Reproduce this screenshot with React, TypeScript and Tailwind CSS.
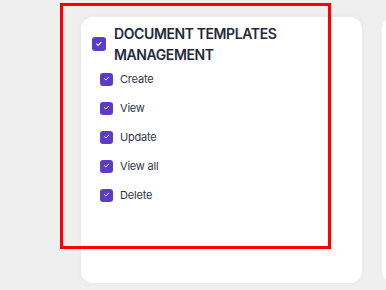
import React from 'react';

const Check: React.FC<{ size: number }> = ({ size }) => (
  <span
    className="flex shrink-0 items-center justify-center rounded-[3px] bg-[#5b3cc4]"
    style={{ width: size, height: size }}
  >
    <svg width={size * 0.55} height={size * 0.55} viewBox="0 0 12 12" fill="none">
      <path d="M2.5 6.2l2.3 2.2 4.7-4.8" stroke="white" strokeWidth="1.6" strokeLinecap="round" strokeLinejoin="round" />
    </svg>
  </span>
);

const permissions = ['Create', 'View', 'Update', 'View all', 'Delete'];

export default function App() {
  return (
    <div className="relative h-[290px] w-[386px] overflow-hidden bg-[#efefef] font-['Inter',sans-serif]">
      <div className="flex gap-[20px] pl-[81px] pt-[17px]">
        {/* Permission card */}
        <div className="h-[266px] w-[281px] shrink-0 rounded-[12px] bg-white px-[11px] pt-[6px] shadow-[0_0_6px_rgba(0,0,0,0.04)]">
          <div className="flex items-center gap-[8px]">
            <Check size={14} />
            <div className="text-[14px] font-semibold uppercase leading-[21px] tracking-[-0.4px] text-[#1f2a3c]">
              Document Templates
              <br />
              Management
            </div>
          </div>
          <ul className="mt-[7px] flex flex-col gap-[15px] pl-[8px]">
            {permissions.map((p) => (
              <li key={p} className="flex h-[14px] items-center gap-[7px]">
                <Check size={13} />
                <span className="text-[11px] tracking-[-0.2px] text-[#2f3545]">{p}</span>
              </li>
            ))}
          </ul>
        </div>
        {/* Next card, cut off */}
        <div className="h-[266px] w-[281px] shrink-0 rounded-[12px] bg-white" />
      </div>
      {/* Annotation overlay */}
      <div className="pointer-events-none absolute left-[60px] top-[3px] h-[246px] w-[271px] border-[3px] border-[#ff0000]" />
    </div>
  );
}
